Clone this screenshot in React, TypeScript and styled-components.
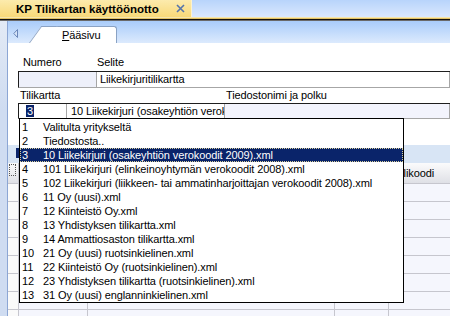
import React from "react";
import styled, { createGlobalStyle } from "styled-components";

const GlobalStyle = createGlobalStyle`
  html, body {
    margin: 0;
    padding: 0;
    background: #fff;
  }
  body {
    font-family: "Liberation Sans", Arial, sans-serif;
    font-size: 11px;
    letter-spacing: -0.1px;
    color: #000;
  }
`;

const Window = styled.div`
  width: 450px;
  height: 316px;
  overflow: hidden;
  display: flex;
  flex-direction: column;
  background: #fff;
`;

const TitleBar = styled.div`
  flex: none;
  height: 17px;
  display: flex;
  background: linear-gradient(#b8d4fb, #dae8fe);
`;

const TitleTab = styled.div`
  width: 192px;
  box-sizing: border-box;
  display: flex;
  align-items: center;
  justify-content: space-between;
  padding: 0 6px 0 16px;
  background: linear-gradient(#fcebad, #f8d979);
  border-right: 1px solid #fdf2cc;
  .title {
    font-weight: bold;
    font-size: 11.5px;
    letter-spacing: 0;
    white-space: nowrap;
  }
  svg {
    display: block;
  }
`;

const TitleRule = styled.div`
  flex: none;
  height: 4px;
  background: linear-gradient(
    to bottom,
    #f5e6ae 0 1px,
    #e2c163 1px 2px,
    #111 2px 3px,
    #6a6a6a 3px 4px
  );
`;

const Main = styled.div`
  flex: 1;
  display: flex;
  min-height: 0;
`;

const Gutter = styled.div`
  flex: none;
  width: 7px;
  background: linear-gradient(#e3eaf5, #cfdcf1 30%);
  border-right: 1px solid #8ca6d4;
`;

const Workspace = styled.div`
  flex: 1;
  display: flex;
  flex-direction: column;
  min-width: 0;
`;

const TabStrip = styled.div`
  flex: none;
  height: 22px;
  display: flex;
  align-items: flex-end;
  padding-left: 5px;
  background: linear-gradient(#a9ccfa, #dceafd);
  svg {
    display: block;
    margin-bottom: 5px;
  }
`;

const Tab = styled.div`
  position: relative;
  margin-left: 24px;
  width: 74px;
  height: 17px;
  line-height: 17px;
  padding-left: 19px;
  box-sizing: border-box;
  background: #fff;
  border-top: 1px solid #8aa2c4;
  border-right: 1px solid #8aa2c4;
  border-top-right-radius: 3px;
  &::before {
    content: "";
    position: absolute;
    left: -14px;
    top: -1px;
    bottom: 0;
    width: 15px;
    background: #fff;
    border-top: 1px solid #8aa2c4;
    border-left: 1px solid #8aa2c4;
    transform: skewX(-36deg);
    transform-origin: bottom left;
  }
  span {
    position: relative;
  }
`;

const Panel = styled.div`
  position: relative;
  flex: 1;
  display: flex;
  flex-direction: column;
  background: #fff;
`;

const Form = styled.div`
  padding: 12px 0 0 10px;
  display: flex;
  flex-direction: column;
`;

const LabelRow = styled.div<{ $cols: string; $height: number }>`
  display: grid;
  grid-template-columns: ${(p) => p.$cols};
  height: ${(p) => p.$height}px;
  line-height: 14px;
  white-space: nowrap;
`;

const Label = styled.div<{ $pad: number }>`
  padding-left: ${(p) => p.$pad}px;
`;

const FieldRow = styled.div<{ $cols: string; $height: number }>`
  display: grid;
  grid-template-columns: ${(p) => p.$cols};
  height: ${(p) => p.$height}px;
  line-height: ${(p) => p.$height}px;
  border-top: 1px solid #1e1e1e;
  border-left: 1px solid #1e1e1e;
  border-bottom: 1px solid #a6a6a6;
  white-space: nowrap;
`;

const Field = styled.div<{ $tint?: boolean }>`
  background: ${(p) => (p.$tint ? "#f3f4fd" : "#fff")};
  border-right: 1px solid #a6a6a6;
  padding-left: 3px;
  overflow: hidden;
`;

const CodeField = styled.div<{ $tint?: boolean }>`
  background: ${(p) => (p.$tint ? "#eef0fa" : "#fff")};
  border-right: 1px solid #a6a6a6;
`;

const Combo = styled.div`
  display: grid;
  grid-template-columns: 48px 1fr;
  border-right: 1px solid #a6a6a6;
  overflow: hidden;
  .code {
    padding-left: 7px;
    border-right: 1px solid #a6a6a6;
    display: flex;
    align-items: center;
  }
  .code span {
    background: #0a246a;
    color: #fff;
    line-height: 12px;
    padding: 0 1px;
  }
  .name {
    padding-left: 4px;
    overflow: hidden;
  }
`;

const Spacer = styled.div`
  height: 26px;
`;

const GroupBand = styled.div`
  height: 18px;
  background: #d8e5f5;
`;

const GridRow = styled.div<{ $header?: boolean }>`
  display: grid;
  grid-template-columns: 11px 69px 247px 54px 1fr;
  height: ${(p) => (p.$header ? 20 : 17)}px;
  line-height: ${(p) => (p.$header ? 20 : 17)}px;
  border-bottom: 1px solid #c6c6ce;
  background: ${(p) =>
    p.$header ? "linear-gradient(#fbfbfc, #dfe0e6)" : "#f5f6fd"};
  white-space: nowrap;
`;

const Cell = styled.div`
  border-right: 1px solid #c6c6ce;
  padding-left: 6px;
  overflow: hidden;
  &:last-child {
    border-right: none;
  }
`;

const RowHead = styled.div<{ $header?: boolean }>`
  background: ${(p) => (p.$header ? "transparent" : "#fafafa")};
  border-right: 1px solid #c6c6ce;
  position: relative;
  ${(p) =>
    p.$header &&
    `&::after {
      content: "";
      position: absolute;
      left: 1px;
      top: 1px;
      width: 5px;
      height: 10px;
      border: 1px dotted #555;
    }`}
`;

const DropList = styled.div`
  position: absolute;
  left: 11px;
  top: 75px;
  width: 385px;
  box-sizing: border-box;
  border: 1px solid #000;
  padding-top: 1px;
  background: #fff;
  white-space: nowrap;
`;

const DropItem = styled.div<{ $selected?: boolean }>`
  position: relative;
  display: grid;
  grid-template-columns: 21px 1fr;
  height: 14px;
  line-height: 14px;
  ${(p) =>
    p.$selected &&
    `
    background: #0a246a;
    color: #fff;
    outline: 1px dotted #d8cf9a;
    outline-offset: -1px;
    &::before {
      content: "";
      position: absolute;
      left: -4px;
      top: 0;
      width: 3px;
      height: 10px;
      background: #0a246a;
    }
  `}
  span {
    padding-left: 2px;
  }
`;

const charts = [
  "Valitulta yritykseltä",
  "Tiedostosta..",
  "10 Liikekirjuri (osakeyhtiön verokoodit 2009).xml",
  "101 Liikekirjuri (elinkeinoyhtymän verokoodit 2008).xml",
  "102 Liikekirjuri (liikkeen- tai ammatinharjoittajan verokoodit 2008).xml",
  "11 Oy (uusi).xml",
  "12 Kiinteistö Oy.xml",
  "13 Yhdistyksen tilikartta.xml",
  "14 Ammattiosaston tilikartta.xml",
  "21 Oy (uusi) ruotsinkielinen.xml",
  "22 Kiinteistö Oy (ruotsinkielinen).xml",
  "23 Yhdistyksen tilikartta (ruotsinkielinen).xml",
  "31 Oy (uusi) englanninkielinen.xml",
];

const ArrowIcon = () => (
  <svg width="6" height="9" viewBox="0 0 6 9">
    <path d="M4.5 0.5 L0.8 4.5 L4.5 8.5 Z" fill="#d6e4f8" stroke="#6a86b8" />
  </svg>
);

const CloseIcon = () => (
  <svg width="9" height="9" viewBox="0 0 9 9">
    <path d="M1 1 L8 8 M8 1 L1 8" stroke="#5574ab" strokeWidth="1.6" />
  </svg>
);

export default function App() {
  return (
    <Window>
      <GlobalStyle />
      <TitleBar>
        <TitleTab>
          <span className="title">KP Tilikartan käyttöönotto</span>
          <CloseIcon />
        </TitleTab>
      </TitleBar>
      <TitleRule />
      <Main>
        <Gutter />
        <Workspace>
          <TabStrip>
            <ArrowIcon />
            <Tab>
              <span>
                <u>P</u>ääsivu
              </span>
            </Tab>
          </TabStrip>
          <Panel>
            <Form>
              <LabelRow $cols="79px 1fr" $height={16}>
                <Label $pad={5}>Numero</Label>
                <Label $pad={0}>Selite</Label>
              </LabelRow>
              <FieldRow $cols="78px 1fr" $height={15}>
                <CodeField $tint />
                <Field>Liikekirjuritilikartta</Field>
              </FieldRow>
              <LabelRow $cols="207px 1fr" $height={15}>
                <Label $pad={2}>Tilikartta</Label>
                <Label $pad={1}>Tiedostonimi ja polku</Label>
              </LabelRow>
              <FieldRow $cols="206px 1fr" $height={14}>
                <Combo>
                  <div className="code">
                    <span>3</span>
                  </div>
                  <div className="name">
                    10 Liikekirjuri (osakeyhtiön verokoodit 2009).xml
                  </div>
                </Combo>
                <Field $tint />
              </FieldRow>
            </Form>
            <Spacer />
            <GroupBand />
            <GridRow $header>
              <RowHead $header />
              <Cell />
              <Cell />
              <Cell />
              <Cell>Tilikoodi</Cell>
            </GridRow>
            {Array.from({ length: 8 }).map((_, i) => (
              <GridRow key={i}>
                <RowHead />
                <Cell />
                <Cell />
                <Cell />
                <Cell />
              </GridRow>
            ))}
            <DropList>
              {charts.map((c, i) => (
                <DropItem key={i} $selected={i === 2}>
                  <span>{i + 1}</span>
                  <span>{c}</span>
                </DropItem>
              ))}
            </DropList>
          </Panel>
        </Workspace>
      </Main>
    </Window>
  );
}
